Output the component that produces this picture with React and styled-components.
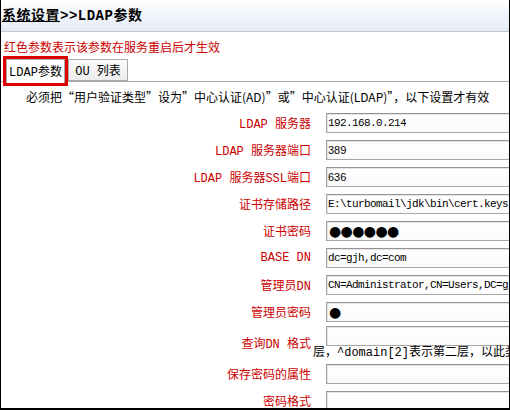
import React from "react";
import styled, { createGlobalStyle } from "styled-components";

const GlobalStyle = createGlobalStyle`
  html, body {
    margin: 0;
    padding: 0;
    background: #fff;
  }
  body {
    font-family: "Noto Sans CJK SC", sans-serif;
    font-size: 12px;
  }
`;

const CJK = `"Liberation Mono", "Noto Sans CJK SC", monospace`;

const fields = [
  { label: "LDAP 服务器", value: "192.168.0.214", kind: "mono" },
  { label: "LDAP 服务器端口", value: "389", kind: "sans" },
  { label: "LDAP 服务器SSL端口", value: "636", kind: "sans" },
  { label: "证书存储路径", value: "E:\\turbomail\\jdk\\bin\\cert.keystore", kind: "mono" },
  { label: "证书密码", value: "●●●●●●", kind: "dots" },
  { label: "BASE DN", value: "dc=gjh,dc=com", kind: "mono" },
  { label: "管理员DN", value: "CN=Administrator,CN=Users,DC=gjh,DC=com", kind: "mono" },
  { label: "管理员密码", value: "●", kind: "dots" },
  {
    label: "查询DN 格式",
    value: "",
    kind: "mono",
    help: "层，^domain[2]表示第二层，以此类推",
  },
  { label: "保存密码的属性", value: "", kind: "mono" },
  { label: "密码格式", value: "", kind: "mono" },
];

const App = () => {
  return (
    <>
      <GlobalStyle />
      <Page>
        <Header>
          <Title>
            <TitleLink>系统设置</TitleLink>&gt;&gt;LDAP参数
          </Title>
        </Header>
        <Note>红色参数表示该参数在服务重启后才生效</Note>
        <TabStrip>
          <Tab $active>LDAP参数</Tab>
          <Tab>OU 列表</Tab>
        </TabStrip>
        <Notice>
          必须把“用户验证类型”设为”中心认证(AD)”或”中心认证(LDAP)”，以下设置才有效
        </Notice>
        <Form>
          {fields.map((f) => (
            <Row key={f.label} $tall={!!f.help}>
              <Label>{f.label}</Label>
              <Field>
                <Input readOnly value={f.value} $kind={f.kind} />
                {f.help && <Help>{f.help}</Help>}
              </Field>
            </Row>
          ))}
        </Form>
      </Page>
    </>
  );
};

const Page = styled.div`
  width: 508px;
  height: 408px;
  border-left: 1px solid #000;
  border-right: 1px solid #000;
  border-bottom: 2px solid #000;
  overflow: hidden;
  background: #fff;
`;

const Header = styled.div`
  height: 31px;
  border-bottom: 1px solid #c3c9d0;
  background: linear-gradient(#ffffff 0%, #f4f8fd 35%, #e5ebf6 100%);
  display: flex;
  align-items: center;
  padding-left: 1px;
`;

const Title = styled.div`
  font-family: ${CJK};
  font-weight: bold;
  font-size: 14px;
  letter-spacing: 0.5px;
  color: #000;
  margin-top: -4px;
`;

const TitleLink = styled.span`
  text-decoration: underline;
`;

const Note = styled.div`
  color: #cc0000;
  font-size: 12px;
  line-height: 16px;
  padding: 7px 0 0 3px;
`;

const TabStrip = styled.div`
  display: flex;
  align-items: flex-end;
  gap: 3px;
  margin-top: 4px;
  padding-left: 5px;
  height: 22px;
  border-bottom: 1px solid #a9a9a9;
`;

const Tab = styled.div`
  box-sizing: border-box;
  height: ${(p) => (p.$active ? "24px" : "22px")};
  margin-bottom: ${(p) => (p.$active ? "-2px" : "0")};
  width: ${(p) => (p.$active ? "59px" : "60px")};
  display: flex;
  align-items: center;
  justify-content: center;
  padding-bottom: ${(p) => (p.$active ? "2px" : "0")};
  font-family: ${CJK};
  font-size: 12px;
  color: #000;
  background: ${(p) =>
    p.$active ? "#fff" : "linear-gradient(#fbfbfb, #ececec)"};
  border: 1px solid #a9a9a9;
  border-bottom: ${(p) => (p.$active ? "none" : "1px solid #a9a9a9")};
  outline: ${(p) => (p.$active ? "3px solid #e00000" : "none")};
  outline-offset: 0;
`;

const Notice = styled.div`
  font-size: 12px;
  line-height: 16px;
  padding: 7px 0 0 25px;
  white-space: nowrap;
  color: #000;
`;

const Form = styled.div`
  margin-top: 4px;
`;

const Row = styled.div`
  display: flex;
  align-items: ${(p) => (p.$tall ? "flex-start" : "center")};
  height: ${(p) => (p.$tall ? "35px" : "27px")};
`;

const Label = styled.div`
  width: 310px;
  flex-shrink: 0;
  text-align: right;
  color: #cc0000;
  font-family: ${CJK};
  font-size: 12px;
  white-space: nowrap;
  align-self: center;
`;

const Field = styled.div`
  padding-left: 2px;
  display: flex;
  flex-direction: column;
  flex: 1;
  min-width: 0;
`;

const fontFor = (kind) => {
  if (kind === "sans") return `font-family: "Liberation Sans", sans-serif; font-size: 11px;`;
  if (kind === "dots")
    return `font-family: "DejaVu Sans", sans-serif; font-size: 14px; letter-spacing: -0.6px; padding-left: 2px;`;
  return `font-family: "Liberation Mono", monospace; font-size: 11px; letter-spacing: -0.6px;`;
};

const Input = styled.input`
  box-sizing: border-box;
  display: block;
  margin: 1px 0 0 13px;
  width: 300px;
  height: 20px;
  padding: 0 1px;
  border: 1px solid #a6a6a6;
  border-top-color: #949494;
  box-shadow: inset 1px 1px 0 #e4e4e4;
  background: linear-gradient(#ffffff, #fafafa);
  color: #000;
  outline: none;
  ${(p) => fontFor(p.$kind)}
`;

const Help = styled.div`
  font-family: ${CJK};
  font-size: 12px;
  line-height: 14px;
  white-space: nowrap;
  color: #000;
`;

export default App;
